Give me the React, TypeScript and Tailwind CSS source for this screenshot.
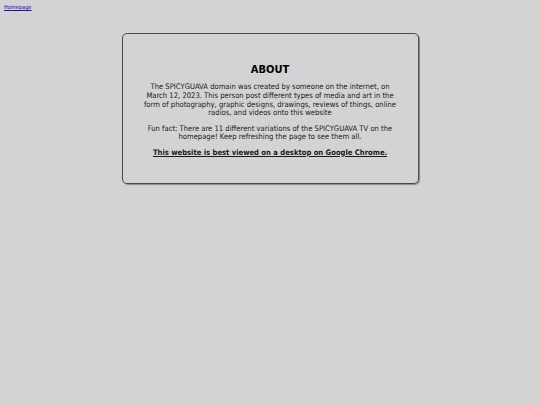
import React from "react";

const App = () => {
  return (
    <div
      className="min-h-[405px] w-full bg-[#d3d3d3] text-[#1a1a1a]"
      style={{ fontFamily: '"DejaVu Sans Condensed", "DejaVu Sans", Verdana, sans-serif' }}
    >
      {/* Top link */}
      <div className="px-[4px] pt-[3px] text-[5.6px] leading-[8px]">
        <a href="#" className="text-[#1a0dab] underline">
          Homepage
        </a>
      </div>

      {/* About card */}
      <div className="mx-auto mt-[22px] w-[297px] rounded-[5px] border-[1.5px] border-[#4a4a4a] px-[20px] pt-[29px] pb-[25px] text-center shadow-[1px_1px_1px_rgba(0,0,0,0.35)]">
        <h1 className="text-[11px] font-bold leading-[14px] text-black">ABOUT</h1>
        <p className="mt-[6px] text-[7.6px] leading-[8.8px]">
          The SPICYGUAVA domain was created by someone on the internet, on
          March 12, 2023. This person post different types of media and art in
          the form of photography, graphic designs, drawings, reviews of things,
          online radios, and videos onto this website
        </p>
        <p className="mt-[6.5px] text-[7.6px] leading-[8.8px]">
          Fun fact: There are 11 different variations of the SPICYGUAVA TV on
          the homepage! Keep refreshing the page to see them all.
        </p>
        <p className="mt-[6.5px] text-[7.6px] font-bold leading-[8.8px] underline">
          This website is best viewed on a desktop on Google Chrome.
        </p>
      </div>
    </div>
  );
};

export default App;
